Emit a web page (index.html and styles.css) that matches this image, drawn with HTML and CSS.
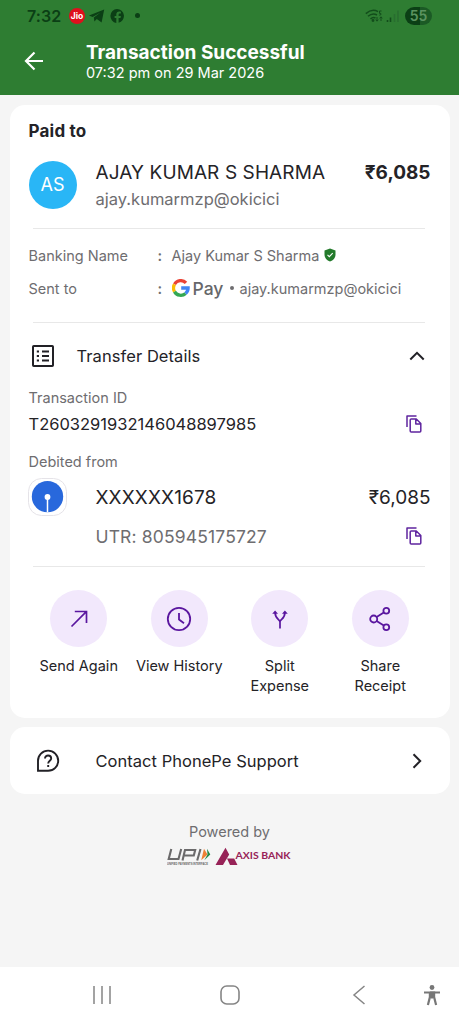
FILE: index.html
```html
<!DOCTYPE html>
<html lang="en">
<head>
<meta charset="utf-8">
<title>Transaction Successful</title>
<link rel="stylesheet" href="styles.css">
</head>
<body>
<header class="header">
  <div class="status">
    <span class="clock">7:32</span>
    <span class="jio">Jio</span>
    <svg class="telegram" width="16" height="14" viewBox="0 0 16 14"><path d="M0 6.6 15.2.6 12.6 13.6 7.8 10 5.4 12.4 4.8 8.4 11.6 3.4 3.6 8Z"/></svg>
    <svg class="facebook" width="14" height="14" viewBox="0 0 14 14"><path d="M7 0a7 7 0 0 1 1.600 13.800V9h1.900l.4-2H8.600V5.900c0-1 .4-1.400 1.300-1.400h1V2.700c-2.900-.6-4.600.3-4.600 3V7H4.600v2h1.700v4.900A7 7 0 0 1 7 0Z"/></svg>
    <span class="dot"></span>
    <svg class="signal" width="35" height="14" viewBox="0 0 35 14" fill="none" stroke="#124d1b" stroke-width="1.500"><path d="M.8 4.600Q7-.8 13 2.600M3 7.300Q7.500 3.400 12 6M5.500 10Q8 7.600 10.500 9"/><circle cx="8" cy="11.500" r=".7"/><path d="M16.500 2h-2v2.400h1.300q1 1.700-1.500 1.800M12 8v4M10.700 10.700 12 12.200l1.300-1.500M16 12V8M14.700 9.300 16 7.800l1.300 1.500" stroke-width="1"/><path d="M22.500 13v-2M25.500 13V8.500" stroke-width="1.600"/><path d="M29.500 13V5M33 13V1.500" stroke="#286e30" stroke-width="1.600"/></svg>
    <span class="battery">55</span>
  </div>
  <div class="titlebar">
    <svg class="back" width="20" height="20" viewBox="0 0 20 20" fill="none" stroke="#fff" stroke-width="2.200"><path d="M19 10H2M10.500 1.500 2 10l8.500 8.500"/></svg>
    <div>
      <h1 class="title">Transaction Successful</h1>
      <p class="subtitle">07:32 pm on 29 Mar 2026</p>
    </div>
  </div>
</header>
<main class="content">
  <section class="card receipt">
    <h2 class="paid">Paid to</h2>
    <div class="payee">
      <span class="avatar">AS</span>
      <div class="who">
        <div class="name">AJAY KUMAR S SHARMA</div>
        <div class="vpa">ajay.kumarmzp@okicici</div>
      </div>
      <span class="amount-bold">₹6,085</span>
    </div>
    <hr class="rule">
    <div class="fact banking">
      <span class="key">Banking Name</span><span class="colon">:</span><span class="bankname">Ajay Kumar S Sharma</span>
      <svg class="shield" width="12" height="14" viewBox="0 0 12 14"><path d="M6 .5 11.500 2.500V7c0 3-2.300 5.300-5.500 6.500C2.800 12.300.5 10 .5 7V2.500Z" fill="#237a2b"/><path d="m3.500 6.800 1.800 1.800L8.700 5.200" fill="none" stroke="#fff" stroke-width="1.100"/></svg>
    </div>
    <div class="fact sent">
      <span class="key">Sent to</span><span class="colon">:</span>
      <svg class="google" width="18" height="18" viewBox="0 0 18 18" fill="none" stroke-width="3.300"><path d="M2.500 5.300A7.200 7.200 0 0 1 14 3.900" stroke="#ea4335"/><path d="M2.500 12.600A7.200 7.200 0 0 1 2.500 5.300" stroke="#fbbc04"/><path d="M13.600 14.500A7.200 7.200 0 0 1 2.500 12.600" stroke="#34a853"/><path d="M9.200 9h6.900a7.200 7.200 0 0 1-2.500 5.500" stroke="#4285f4"/></svg>
      <span class="pay">Pay</span><span class="bullet"></span><span class="sentvpa">ajay.kumarmzp@okicici</span>
    </div>
    <hr class="rule rule-two">
    <div class="transfer">
      <svg width="22" height="22" viewBox="0 0 22 22" fill="none" stroke="#222126" stroke-width="2"><rect x="1" y="1" width="20" height="20" rx=".8"/><path d="M4.800 6.500h2.200M4.800 11h2.200M4.800 15.500h2.200M10 6.500h7M10 11h7M10 15.500h7" stroke-width="1.900"/></svg>
      <span class="transfer-title">Transfer Details</span>
      <svg class="chevron" width="16" height="10" viewBox="0 0 16 10" fill="none" stroke="#222126" stroke-width="2"><path d="m1.300 8.500 6.700-6.700 6.700 6.700"/></svg>
    </div>
    <div class="label">Transaction ID</div>
    <div class="txrow">
      <span class="txid">T2603291932146048897985</span>
      <svg class="copy" width="16" height="18" viewBox="0 0 16 18" fill="none" stroke="#5f259f" stroke-width="1.500" stroke-linejoin="round"><path d="M1 12V1h9.500M5.200 4h5.100l4.500 4.500v7.500q0 1-1 1H5.200q-1 0-1-1V5q0-1 1-1ZM9.800 4v4.900h5"/></svg>
    </div>
    <div class="label">Debited from</div>
    <div class="account">
      <svg width="39" height="38" viewBox="0 0 39 38"><rect x=".5" y=".5" width="38" height="37" rx="13" fill="#fff" stroke="#e5e3e8"/><circle cx="19.500" cy="18.600" r="15.700" fill="#2868dc"/><path d="M19.500 19v15.300" stroke="#fff" stroke-width="1.500"/><circle cx="19.500" cy="19" r="2.900" fill="#fff"/></svg>
      <span class="number">XXXXXX1678</span>
      <span class="amount">₹6,085</span>
    </div>
    <div class="utrrow">
      <span class="utr">UTR: 805945175727</span>
      <svg class="copy" width="16" height="18" viewBox="0 0 16 18" fill="none" stroke="#5f259f" stroke-width="1.500" stroke-linejoin="round"><path d="M1 12V1h9.500M5.200 4h5.100l4.500 4.500v7.500q0 1-1 1H5.200q-1 0-1-1V5q0-1 1-1ZM9.800 4v4.900h5"/></svg>
    </div>
    <hr class="rule rule-three">
    <div class="actions">
      <div class="action"><span class="bubble"><svg width="26" height="26" viewBox="0 0 26 26" fill="none" stroke="#5a169f" stroke-width="1.700"><path d="M5.500 20.500 20.300 5.700M8.800 5.500h11.700v11.400"/></svg></span><span>Send Again</span></div>
      <div class="action"><span class="bubble"><svg width="26" height="26" viewBox="0 0 26 26" fill="none" stroke="#5a169f" stroke-width="1.800"><circle cx="13" cy="13" r="11.200"/><path d="M13 7v6.500l5 3.700"/></svg></span><span>View History</span></div>
      <div class="action"><span class="bubble"><svg width="26" height="26" viewBox="0 0 26 26" fill="none" stroke="#5a169f" stroke-width="1.700"><path d="M13 22.500V16c0-2.300-4.900-3-4.900-9.500M13 15.500c.8-2.300 4.900-3 4.900-9"/><path d="m5.200 7.700 2.900-3.300 2.900 3.300ZM15 7.700l2.900-3.300 2.900 3.300Z" fill="#5a169f" stroke="none"/></svg></span><span>Split<br>Expense</span></div>
      <div class="action"><span class="bubble"><svg width="26" height="26" viewBox="0 0 26 26" fill="none" stroke="#5a169f" stroke-width="1.800"><circle cx="6.700" cy="13" r="3.500"/><circle cx="19.300" cy="4.700" r="2.900"/><circle cx="19.300" cy="21.300" r="2.900"/><path d="m9.600 11 7.200-4.600M9.600 15l7.200 4.600"/></svg></span><span>Share<br>Receipt</span></div>
    </div>
  </section>
  <section class="card support">
    <svg width="24" height="24" viewBox="0 0 24 24" fill="none" stroke="#222126" stroke-width="1.900"><path d="M2 21.800V11.700A10.100 10.100 0 1 1 12.100 21.800Z"/><path d="M9 9.500C9 5.400 15.200 5.600 15.200 9.400c0 2.300-3 2.500-3 5M12.200 16v2.100"/></svg>
    <span class="support-title">Contact PhonePe Support</span>
    <svg class="go" width="10" height="16" viewBox="0 0 10 16" fill="none" stroke="#222126" stroke-width="2"><path d="m1.500 1.300 6.700 6.700-6.700 6.700"/></svg>
  </section>
  <div class="powered">Powered by</div>
  <div class="brands">
    <svg width="126" height="20" viewBox="0 0 126 20">
      <g fill="none" stroke="#6b6a6b" stroke-width="2.100"><path d="M4.300 2 1.700 12H11.500L14.200 2M15.500 13.500 18 3H28.200L26.800 8.500H17M30.200 13.500 33.500 2"/></g>
      <path d="m37 1.800 3.500 5.700-6.300 5.800Z" fill="#ee8135"/><path d="m40 1.800 3.300 5.700-6 5.800 3.200-5.800Z" fill="#268947"/>
      <text class="upi-tag" x="0" y="17.500" textLength="41" lengthAdjust="spacingAndGlyphs">UNIFIED PAYMENTS INTERFACE</text>
      <path d="m58.500.800 3.700 6.700L56 18h-7.500ZM60 11.500h7.200L70.500 18H63Z" fill="#972257"/>
      <text class="axis" x="68.500" y="12.300" textLength="55" lengthAdjust="spacingAndGlyphs">AXIS BANK</text>
    </svg>
  </div>
</main>
<nav class="nav">
  <svg width="20" height="20" viewBox="0 0 20 20" fill="none" stroke="#858585" stroke-width="1.500"><path d="M2 1v18M10 1v18M18 1v18"/></svg>
  <svg width="20" height="20" viewBox="0 0 20 20" fill="none" stroke="#858585" stroke-width="1.600"><rect x="1" y="1" width="18" height="18" rx="5.800"/></svg>
  <svg width="14" height="20" viewBox="0 0 14 20" fill="none" stroke="#858585" stroke-width="1.500"><path d="M12.500 1 2 10l10.500 9"/></svg>
  <svg width="18" height="22" viewBox="0 0 18 22" fill="none" stroke="#777" stroke-width="2"><circle cx="9" cy="3.500" r="2.400" fill="#777" stroke="none"/><path d="M1 8.500h16"/><path d="M6.900 8.500h4.200v4.500l2 8M6.900 8.500v4.500l-2 8M9 8.500v6" stroke-width="2.200"/></svg>
</nav>
</body>
</html>
```

FILE: styles.css
```css
* { box-sizing: border-box; }
body {
  margin: 0;
  height: 1024px;
  display: flex;
  flex-direction: column;
  background: #f5f5f5;
  color: #242327;
  font-family: Inter, Roboto, sans-serif;
  overflow: hidden;
}
h1, h2, p { margin: 0; }
svg { flex: none; display: block; }
span, .name, .vpa, .label, .subtitle, .title, .powered { white-space: nowrap; }

.header { height: 95px; background: #2e7d32; flex: none; }
.status { height: 31px; padding-left: 27px; display: flex; align-items: center; color: #0b3f15; }
.clock { font-size: 16px; font-weight: 600; width: 42px; letter-spacing: .1px; }
.jio { width: 16px; height: 16px; border-radius: 50%; background: #df101d; color: #fff; font-size: 8.500px; font-weight: 700; line-height: 16px; text-align: center; }
.telegram { margin-left: 4px; fill: #0b3f15; }
.facebook { margin-left: 5px; fill: #0b3f15; }
.dot { width: 5px; height: 5px; border-radius: 50%; background: #0b3f15; margin-left: 11px; }
.signal { margin-left: 225px; }
.battery { margin-left: 5px; width: 27px; height: 18px; border-radius: 9px; background: linear-gradient(90deg, #0b3f15 55%, #1b5a25 55%); color: #5b9360; font-size: 14px; font-weight: 600; line-height: 18px; text-align: center; }
.titlebar { display: flex; padding-left: 24px; margin-top: 10px; color: #fff; }
.back { margin: 10px 42px 0 0; }
.title { font-size: 19px; font-weight: 700; line-height: 24px; }
.subtitle { font-size: 14.500px; line-height: 18px; margin-top: -1px; }

.content { flex: 1; padding: 10px 9.500px 0; }
.card { background: #fff; border-radius: 15px; }
.receipt { height: 613px; padding: 14px 19px 0; }
.paid { font-size: 17px; font-weight: 700; line-height: 24px; letter-spacing: .2px; }
.payee { display: flex; height: 50px; margin-top: 18px; }
.avatar { width: 48px; height: 48px; border-radius: 50%; background: #29b6f6; color: #fff; font-size: 18px; line-height: 48px; text-align: center; }
.who { margin-left: 19px; }
.name { font-size: 19px; line-height: 24px; letter-spacing: .1px; }
.vpa { font-size: 16.500px; line-height: 24px; margin-top: 2px; color: #6e6d70; }
.amount-bold { margin-left: auto; font-size: 19px; font-weight: 700; line-height: 24px; }
.rule { height: 1px; margin: 17px 6px 0 4px; border: 0; background: #e8e8e8; }
.rule-three { margin-top: 18px; }
.fact { display: flex; align-items: center; height: 32px; font-size: 14.500px; color: #6e6d70; }
.banking { margin-top: 10px; }
.sent { margin-top: 1px; }
.rule-two { margin-top: 18px; }
.key { width: 129px; }
.colon { width: 14px; font-weight: 600; }
.shield { margin-left: 5px; }
.pay { margin-left: 3px; width: 30px; font-size: 17.500px; font-weight: 500; color: #66676a; }
.bullet { width: 4px; height: 4px; border-radius: 50%; background: #6e6d70; margin: 0 6px 0 7px; }
.transfer { display: flex; align-items: center; height: 32px; margin-top: 17px; padding-left: 3px; }
.transfer-title { font-size: 16.500px; letter-spacing: .07px; margin-left: 23px; }
.chevron { margin-left: auto; margin-right: 6px; }
.label { font-size: 14.500px; line-height: 20px; margin-top: 16px; color: #6e6d70; }
.txrow { display: flex; align-items: center; height: 24px; margin-top: 4px; font-size: 16.500px; }
.copy { margin-left: auto; margin-right: 9px; }
.account { display: flex; align-items: center; height: 38px; margin: 6px 0 0 -1px; font-size: 19px; }
.number { margin-left: 29px; letter-spacing: .15px; }
.amount { margin-left: auto; }
.utrrow { display: flex; align-items: center; height: 24px; margin-top: 8px; padding-left: 67px; font-size: 17.500px; letter-spacing: .15px; color: #6e6d70; }
.actions { display: grid; grid-template-columns: repeat(4, 100.500px); margin-top: 23px; }
.action { display: flex; flex-direction: column; align-items: center; text-align: center; font-size: 14.500px; line-height: 20px; }
.bubble { display: grid; place-items: center; width: 57px; height: 57px; border-radius: 50%; background: #f2e8fc; margin-bottom: 9px; }
.support { display: flex; align-items: center; height: 67px; margin-top: 9px; padding: 0 28px 0 26px; }
.support-title { margin-left: 36px; font-size: 16.500px; letter-spacing: .03px; }
.go { margin-left: auto; }
.powered { margin-top: 28px; line-height: 20px; font-size: 14.500px; text-align: center; color: #6e6d70; }
.brands { display: flex; justify-content: center; margin-top: 5px; }
.upi-tag { font: 700 3px "Liberation Sans", sans-serif; fill: #656565; }
.axis { font: 700 10px Lato, sans-serif; fill: #972257; }
.nav { height: 57px; flex: none; background: #fff; display: flex; align-items: center; padding: 0 0 2px 92px; }
.nav svg + svg { margin-left: 108px; }
.nav svg:nth-child(3) { margin-left: 112px; }
.nav svg:nth-child(4) { margin-left: 57px; }
```
